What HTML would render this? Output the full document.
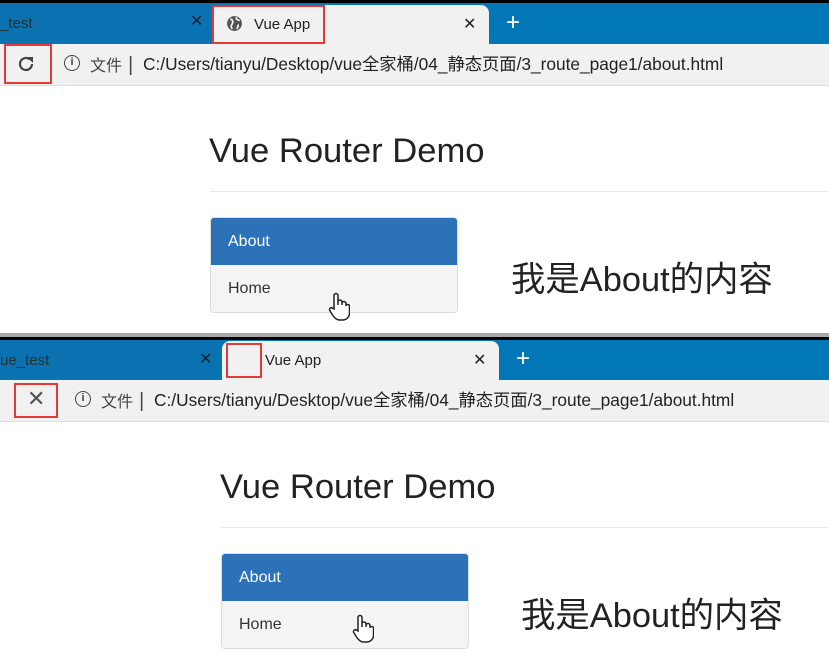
<!DOCTYPE html>
<html><head><meta charset="utf-8"><style>
*{margin:0;padding:0;box-sizing:border-box}
body{width:829px;height:671px;overflow:hidden;background:#fff;position:relative;font-family:"Liberation Sans","Noto Sans CJK SC",sans-serif}
.a{position:absolute}
.bar{background:#0277b8}
.tab{background:#f1f1f1;border-radius:8px 8px 0 0}
.tb{background:#f1f1f1}
.rb{border:2px solid #e53935}
.t{font-size:15px;color:#222}
.h{font-size:34.6px;color:#222}
.hr{height:1px;background:#e8e8e8}
.lg{border:1px solid #ddd;border-radius:4px;overflow:hidden;width:248px}
.ab{background:#2b72b9;color:#fff;height:47px;line-height:47px;padding-left:17px;font-size:16px}
.hm{background:#f4f4f4;color:#333;height:47px;line-height:47px;padding-left:17px;font-size:16px}
.cn{font-size:34.4px;color:#222}
.url{font-size:17.3px;color:#222}
</style></head><body>
<!-- top panel -->
<div class="a" style="left:0;top:0;width:829px;height:3px;background:#000"></div>
<div class="a bar" style="left:0;top:3px;width:829px;height:41px"></div>
<div class="a" style="left:0;top:3px;width:210px;height:40px;background:#0a72b0;border-radius:0 0 8px 0"></div>
<div class="a t" style="left:0;top:15px;color:#233">_test</div>
<div class="a" style="left:190px;top:11px;font-size:16px;color:#123">✕</div>
<div class="a tab" style="left:212px;top:5px;width:277px;height:40px"></div>
<svg class="a" style="left:226px;top:15px" width="17" height="17" viewBox="0 0 16 16"><circle cx="8" cy="8" r="7" fill="#555"/><path d="M4 4c2 0 3 2 2 4s-2 3 0 5M10 2c-1 2 1 3 3 3M11 9c1 1 0 3-1 4" stroke="#f1f1f1" stroke-width="1.6" fill="none"/></svg>
<div class="a t" style="left:254px;top:16px">Vue App</div>
<div class="a" style="left:463px;top:14px;font-size:16px;color:#222">✕</div>
<div class="a" style="left:506px;top:9px;font-size:24px;color:#fff">+</div>
<div class="a rb" style="left:212px;top:5px;width:113px;height:39px"></div>
<div class="a tb" style="left:0;top:44px;width:829px;height:41px"></div>
<div class="a" style="left:0;top:85px;width:829px;height:1px;background:#ddd"></div>
<svg class="a" style="left:16px;top:54px" width="20" height="20" viewBox="0 0 20 20"><path d="M16 10a6 6 0 1 1-2-4.5" stroke="#444" stroke-width="2.2" fill="none"/><path d="M11 3h6v6z" fill="#444"/></svg>
<div class="a rb" style="left:4px;top:44px;width:48px;height:40px"></div>
<div class="a" style="left:64px;top:55px;width:16px;height:16px;border:1.5px solid #444;border-radius:50%;font-size:11px;text-align:center;line-height:13px;font-weight:bold;color:#444">i</div>
<div class="a" style="left:90px;top:52px;font-size:16px;color:#444">文件 ⎮</div>
<div class="a url" style="left:143px;top:50px">C:/Users/tianyu/Desktop/vue全家桶/04_静态页面/3_route_page1/about.html</div>
<div class="a h" style="left:209px;top:132px">Vue Router Demo</div>
<div class="a hr" style="left:210px;top:191px;width:619px"></div>
<div class="a lg" style="left:210px;top:217px"><div class="ab">About</div><div class="hm">Home</div></div>
<div class="a cn" style="left:511px;top:251px">我是About的内容</div>
<svg class="a" style="left:328px;top:292px" width="22" height="30" viewBox="0 0 22 30"><path d="M6 17V3.5a2 2 0 0 1 4 0V13V10a2 2 0 0 1 4 0v3v-1.5a2 2 0 0 1 4 0V14v-.5a2 2 0 0 1 3.5 0V21c0 4-3 7-7 7h-3c-3 0-5-2-7-5l-3-5a2 2 0 0 1 3-2z" fill="#fff" stroke="#222" stroke-width="1.5"/></svg>
<div class="a" style="left:0;top:333px;width:829px;height:4px;background:#aaa"></div>
<div class="a" style="left:0;top:337px;width:829px;height:3px;background:#000"></div>
<!-- bottom panel -->
<div class="a bar" style="left:0;top:340px;width:829px;height:40px"></div>
<div class="a" style="left:0;top:340px;width:220px;height:39px;background:#0a72b0;border-radius:0 0 8px 0"></div>
<div class="a t" style="left:0;top:352px;color:#233">ue_test</div>
<div class="a" style="left:199px;top:349px;font-size:16px;color:#123">✕</div>
<div class="a tab" style="left:222px;top:341px;width:277px;height:40px"></div>
<div class="a t" style="left:265px;top:352px">Vue App</div>
<div class="a" style="left:473px;top:350px;font-size:16px;color:#222">✕</div>
<div class="a" style="left:516px;top:345px;font-size:24px;color:#fff">+</div>
<div class="a rb" style="left:226px;top:343px;width:36px;height:35px"></div>
<div class="a tb" style="left:0;top:380px;width:829px;height:41px"></div>
<div class="a" style="left:0;top:421px;width:829px;height:1px;background:#ddd"></div>
<div class="a" style="left:27px;top:386px;font-size:22px;color:#555">✕</div>
<div class="a rb" style="left:14px;top:383px;width:44px;height:35px"></div>
<div class="a" style="left:75px;top:391px;width:16px;height:16px;border:1.5px solid #444;border-radius:50%;font-size:11px;text-align:center;line-height:13px;font-weight:bold;color:#444">i</div>
<div class="a" style="left:101px;top:388px;font-size:16px;color:#444">文件 ⎮</div>
<div class="a url" style="left:154px;top:386px">C:/Users/tianyu/Desktop/vue全家桶/04_静态页面/3_route_page1/about.html</div>
<div class="a h" style="left:220px;top:468px">Vue Router Demo</div>
<div class="a hr" style="left:221px;top:527px;width:608px"></div>
<div class="a lg" style="left:221px;top:553px"><div class="ab">About</div><div class="hm">Home</div></div>
<div class="a cn" style="left:521px;top:587px">我是About的内容</div>
<svg class="a" style="left:352px;top:614px" width="22" height="30" viewBox="0 0 22 30"><path d="M6 17V3.5a2 2 0 0 1 4 0V13V10a2 2 0 0 1 4 0v3v-1.5a2 2 0 0 1 4 0V14v-.5a2 2 0 0 1 3.5 0V21c0 4-3 7-7 7h-3c-3 0-5-2-7-5l-3-5a2 2 0 0 1 3-2z" fill="#fff" stroke="#222" stroke-width="1.5"/></svg>
</body></html>
